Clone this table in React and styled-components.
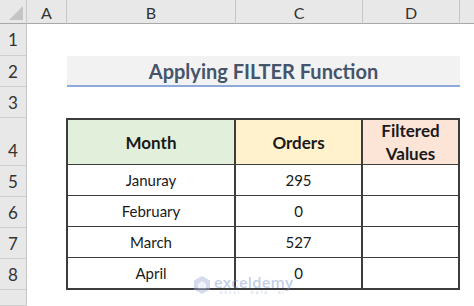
import React from 'react';
import styled, {createGlobalStyle} from 'styled-components';

const GlobalStyle = createGlobalStyle`
  html, body {
    margin: 0;
    padding: 0;
    background: #ffffff;
  }
  body {
    font-family: Lato, "Open Sans", sans-serif;
    overflow: hidden;
  }
`;

const Sheet = styled.div`
  position: relative;
  display: grid;
  grid-template-columns: 27px 40px 169px 127px 97px 1fr;
  grid-template-rows: 24px 32px 31px 31px 48px 31px 31px 31px 31px 1fr;
  width: 474px;
  height: 306px;
  background: #fff;
`;

const Corner = styled.div`
  background: #e8e8e8;
  border-bottom: 1px solid #a8a8a8;
  border-right: 1px solid #c9c9c9;
  box-sizing: border-box;
  display: flex;
  align-items: flex-end;
  justify-content: flex-end;
  padding: 0 3px 3px 0;
`;

const ColHead = styled.div`
  background: #e8e8e8;
  border-bottom: 1px solid #a8a8a8;
  border-right: ${p => (p.$last ? 'none' : '1px solid #c6c6c6')};
  box-sizing: border-box;
  display: flex;
  align-items: center;
  justify-content: center;
  font-size: 16px;
  color: #333;
  padding-top: 1px;
`;

const RowHead = styled.div`
  grid-column: 1;
  grid-row: ${p => p.$row};
  background: #e8e8e8;
  border-bottom: 1px solid #cfcfcf;
  border-right: 1px solid #c6c6c6;
  box-sizing: border-box;
  display: flex;
  align-items: ${p => (p.$tall ? 'flex-end' : 'center')};
  padding-bottom: ${p => (p.$tall ? '4px' : '0')};
  justify-content: center;
  font-size: 17px;
  color: #333;
`;

const Title = styled.div`
  grid-column: 3 / 6;
  grid-row: 3;
  background: #f2f2f2;
  border-bottom: 2px solid #8eaadb;
  box-sizing: border-box;
  display: flex;
  align-items: center;
  justify-content: center;
  font-weight: 700;
  font-size: 20px;
  color: #44546a;
  padding-top: 1px;
`;

const headBg = {
  month: '#e2efda',
  orders: '#fff2cc',
  filtered: '#fce4d6',
};

const Cell = styled.div`
  grid-column: ${p => p.$col};
  grid-row: ${p => p.$row};
  background: ${p => p.$bg || '#fff'};
  border-right: 2px solid #3c3c3c;
  border-bottom: 2px solid #3c3c3c;
  border-left: ${p => (p.$first ? '2px solid #3c3c3c' : 'none')};
  border-top: ${p => (p.$top ? '2px solid #3c3c3c' : 'none')};
  margin-left: ${p => (p.$first ? '-1px' : '0')};
  margin-top: ${p => (p.$top ? '0' : '-1px')};
  box-sizing: border-box;
  display: flex;
  align-items: center;
  justify-content: center;
  text-align: center;
  font-size: ${p => (p.$head ? '17px' : '15px')};
  font-weight: ${p => (p.$head ? 700 : 400)};
  line-height: ${p => (p.$head ? '23px' : '1')};
  color: #1a1a1a;
`;

const Watermark = styled.div`
  position: absolute;
  left: 193px;
  top: 275px;
  display: flex;
  align-items: center;
  gap: 3px;
  opacity: 0.45;
  pointer-events: none;
`;

const MarkText = styled.div`
  display: flex;
  flex-direction: column;
`;

const MarkName = styled.span`
  display: block;
  font-family: "Open Sans", sans-serif;
  font-size: 15px;
  line-height: 14px;
  font-weight: 600;
  color: #7d95c9;
  letter-spacing: 0.2px;
`;

const MarkSub = styled.span`
  display: block;
  font-size: 4px;
  line-height: 4px;
  color: #7d95c9;
  letter-spacing: 2px;
  margin-top: 2px;
  padding-left: 6px;
`;

const rows = [
  {month: 'Januray', orders: '295'},
  {month: 'February', orders: '0'},
  {month: 'March', orders: '527'},
  {month: 'April', orders: '0'},
];

const App = () => {
  return (
    <>
      <GlobalStyle/>
      <Sheet>
        <Corner>
          <svg width="14" height="14" viewBox="0 0 14 14">
            <polygon points="14,0 14,14 0,14" fill="#c4c4c4"/>
          </svg>
        </Corner>
        <ColHead>A</ColHead>
        <ColHead>B</ColHead>
        <ColHead>C</ColHead>
        <ColHead>D</ColHead>
        <ColHead $last/>

        {[1, 2, 3, 4, 5, 6, 7, 8].map(n => (
          <RowHead key={n} $row={n + 1} $tall={n === 4}>{n}</RowHead>
        ))}
        <RowHead $row={10}/>

        <Title>Applying FILTER Function</Title>

        <Cell $col={3} $row={5} $head $top $first $bg={headBg.month}>Month</Cell>
        <Cell $col={4} $row={5} $head $top $bg={headBg.orders}>Orders</Cell>
        <Cell $col={5} $row={5} $head $top $bg={headBg.filtered}>Filtered<br/>Values</Cell>

        {rows.map((r, i) => (
          <React.Fragment key={r.month}>
            <Cell $col={3} $row={i + 6} $first>{r.month}</Cell>
            <Cell $col={4} $row={i + 6}>{r.orders}</Cell>
            <Cell $col={5} $row={i + 6}/>
          </React.Fragment>
        ))}

        <Watermark>
          <svg width="18" height="20" viewBox="0 0 18 20">
            <polygon points="9,1 17,5.5 17,14.5 9,19 1,14.5 1,5.5" fill="#9fb1d9"/>
            <polygon points="9,6 13,9 13,14 5,14 5,9" fill="#ffffff" opacity="0.7"/>
          </svg>
          <MarkText>
            <MarkName>exceldemy</MarkName>
            <MarkSub>EXCEL · DATA · BI</MarkSub>
          </MarkText>
        </Watermark>
      </Sheet>
    </>
  );
};

export default App;
